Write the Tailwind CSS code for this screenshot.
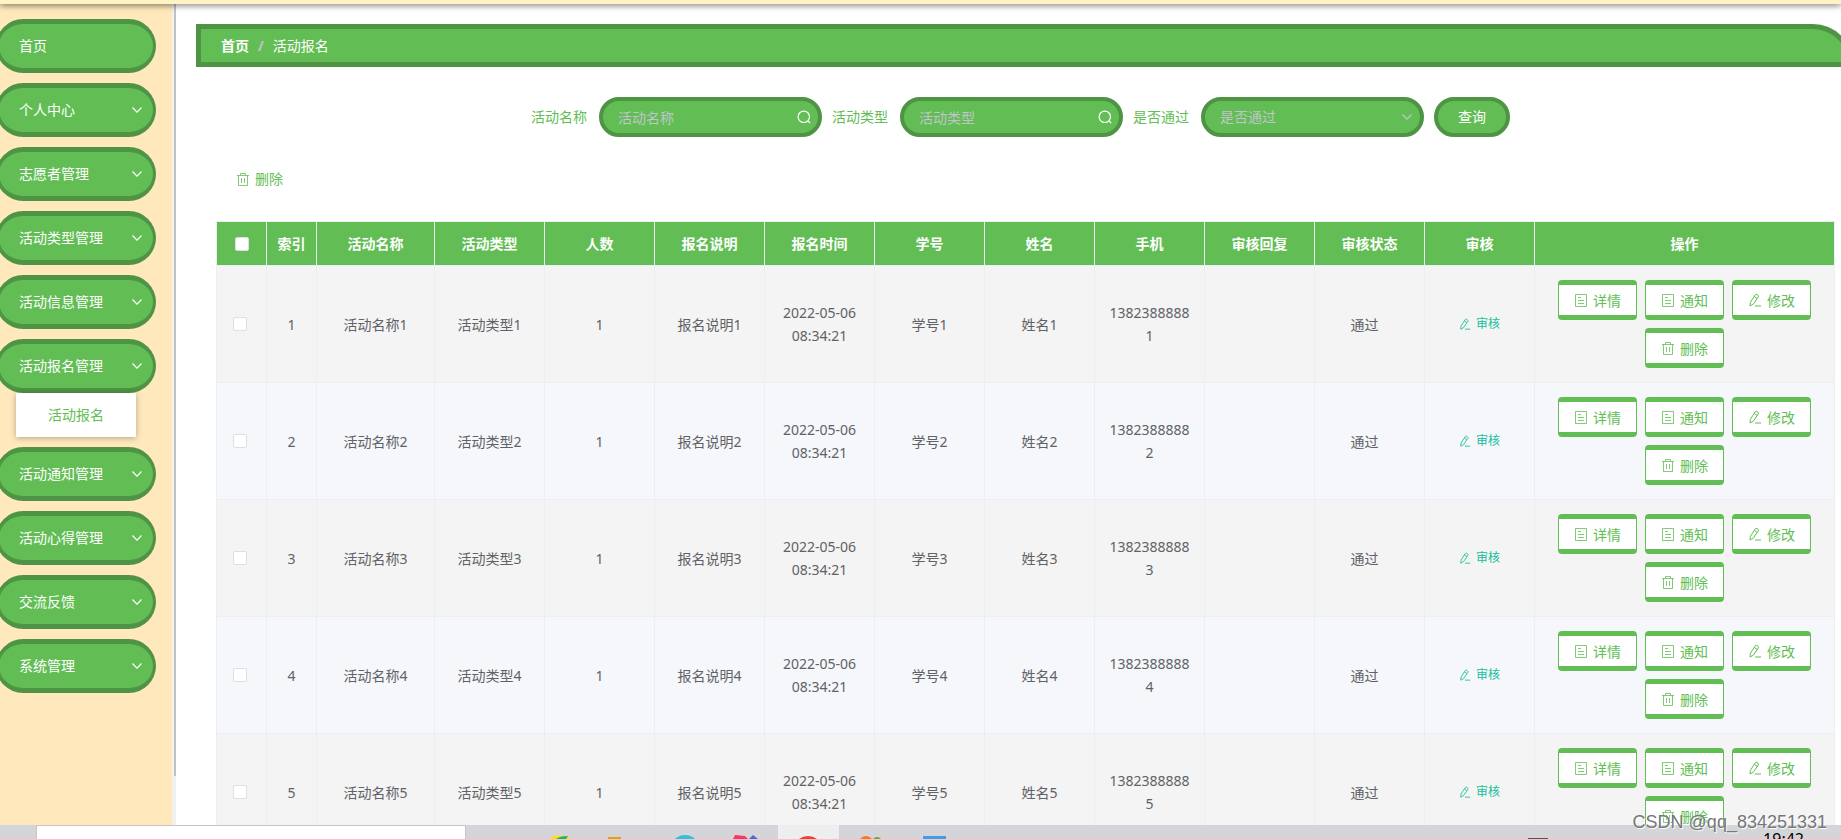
<!DOCTYPE html>
<html lang="zh-CN">
<head>
  <meta charset="UTF-8">
  <meta name="viewport" content="width=device-width, initial-scale=1.0">
  <title>活动报名</title>
  <script src="https://cdn.jsdelivr.net/npm/@tailwindcss/browser@4"></script>
</head>
<body class="bg-white font-['Noto_Sans','Noto_Sans_CJK_SC',sans-serif] text-sm text-[#606266]">
  <!-- 图标 -->
  <svg class="hidden">
    <symbol id="i-down" viewBox="0 0 12 12"><path d="M1.500 3.500 6 8.200 10.500 3.500" fill="none" stroke="currentColor" stroke-width="1.200"/></symbol>
    <symbol id="i-search" viewBox="0 0 14 14"><circle cx="6.800" cy="6.800" r="5.700" fill="none" stroke="currentColor" stroke-width="1.200"/><path d="m11 11 2.200 2.200" stroke="currentColor" stroke-width="1.200"/></symbol>
    <symbol id="i-doc" viewBox="0 0 14 14"><path d="M1.500 1.500h11v12h-11zM4 4.500h3M4 7.500h6M4 10.500h6" fill="none" stroke="currentColor" stroke-width=".8"/></symbol>
    <symbol id="i-edit" viewBox="0 0 14 14"><path d="M2 13 2.400 9.300 7.300 1.800Q8 .9 9 1.500L10 2.200Q10.900 3 10.300 3.900L5.300 11.200ZM6.300 3.400l2.900 1.900M7 13h6" fill="none" stroke="currentColor" stroke-width="1"/></symbol>
    <symbol id="i-trash" viewBox="0 0 14 14"><path d="M1 3.500h12M4.500 3.300V1.500h5v1.800M2.500 3.500v10h9v-10M5.500 6v5M8.500 6v5" fill="none" stroke="currentColor" stroke-width=".8"/></symbol>
  </svg>

  <div class="flex h-screen flex-col overflow-hidden">
    <header class="relative z-10 h-1 shrink-0 bg-[#fff3c4] shadow-[0_1px_6px_rgba(0,0,0,0.7)]"></header>

    <div class="flex min-h-0 flex-1">
      <aside class="flex w-44 shrink-0 bg-[#ffe9bc]">
        <nav id="menu" class="flex-1 overflow-hidden pt-[15px]"></nav>
        <div class="w-1 bg-[#f1f1f1] pl-[2px]">
          <div class="h-[94%] bg-[#c1c1c1]"></div>
        </div>
      </aside>

      <main class="min-w-0 flex-1 overflow-hidden pt-5 pl-5">
        <div class="-mr-3 flex h-[43px] items-center gap-[9px] rounded-tr-[40px] border-5 border-[#4e9444] bg-[#62be54] px-5 text-white">
          <a href="#" class="font-bold">首页</a>
          <span class="font-bold text-[#c0c4cc]">/</span>
          <span>活动报名</span>
        </div>

        <div class="pr-[6px] pl-5">
          <form class="flex justify-center pt-[30px] text-[#62be54]">
            <div class="mr-[10px] flex items-center gap-3">
              <label for="name">活动名称</label>
              <div class="relative">
                <input id="name" type="text" placeholder="活动名称" class="h-10 w-[223px] rounded-full border-4 border-[#4e9444] bg-[#62be54] pr-8 pl-[15px] text-white placeholder:text-[#c0c4cc]">
                <svg class="absolute top-[13px] right-[11px] size-[14px] text-white"><use href="#i-search"/></svg>
              </div>
            </div>
            <div class="mr-[10px] flex items-center gap-3">
              <label for="type">活动类型</label>
              <div class="relative">
                <input id="type" type="text" placeholder="活动类型" class="h-10 w-[223px] rounded-full border-4 border-[#4e9444] bg-[#62be54] pr-8 pl-[15px] text-white placeholder:text-[#c0c4cc]">
                <svg class="absolute top-[13px] right-[11px] size-[14px] text-white"><use href="#i-search"/></svg>
              </div>
            </div>
            <div class="mr-[10px] flex items-center gap-3">
              <label for="pass">是否通过</label>
              <div class="relative">
                <select id="pass" class="h-10 w-[223px] appearance-none rounded-full border-4 border-[#4e9444] bg-[#62be54] pr-8 pl-[15px] text-[#c0c4cc]">
                  <option>是否通过</option>
                </select>
                <svg class="pointer-events-none absolute top-[14px] right-[11px] size-3 text-[#c0c4cc]"><use href="#i-down"/></svg>
              </div>
            </div>
            <button type="button" class="mr-[10px] h-10 w-[76px] rounded-full border-4 border-[#4e9444] bg-[#62be54] text-white">查询</button>
          </form>

          <div class="flex h-[84px] items-center pl-5">
            <button type="button" class="flex items-center gap-[5px] text-[#62be54]">
              <svg class="size-[14px]"><use href="#i-trash"/></svg>删除
            </button>
          </div>

          <table class="w-full table-fixed border-collapse border border-[#ebeef5] text-center leading-[23px]">
            <colgroup>
              <col class="w-[50px]"><col class="w-[50px]"><col>
              <col class="w-[110px]"><col class="w-[110px]"><col class="w-[110px]"><col class="w-[110px]"><col class="w-[110px]">
              <col class="w-[110px]"><col class="w-[110px]"><col class="w-[110px]"><col class="w-[110px]"><col class="w-[110px]">
              <col class="w-[300px]">
            </colgroup>
            <thead class="bg-[#62be54] text-white">
              <tr class="h-11">
                <th class="border border-[#ebeef5]"><input type="checkbox" aria-label="全选" class="mx-auto block size-[14px] appearance-none rounded-xs border border-[#dcdfe6] bg-white"></th>
                <th class="border border-[#ebeef5]">索引</th>
                <th class="border border-[#ebeef5]">活动名称</th>
                <th class="border border-[#ebeef5]">活动类型</th>
                <th class="border border-[#ebeef5]">人数</th>
                <th class="border border-[#ebeef5]">报名说明</th>
                <th class="border border-[#ebeef5]">报名时间</th>
                <th class="border border-[#ebeef5]">学号</th>
                <th class="border border-[#ebeef5]">姓名</th>
                <th class="border border-[#ebeef5]">手机</th>
                <th class="border border-[#ebeef5]">审核回复</th>
                <th class="border border-[#ebeef5]">审核状态</th>
                <th class="border border-[#ebeef5]">审核</th>
                <th class="border border-[#ebeef5]">操作</th>
              </tr>
            </thead>
            <tbody id="rows"></tbody>
          </table>
        </div>
      </main>
    </div>

    <!-- 任务栏 -->
    <footer class="relative flex h-[14px] shrink-0 overflow-hidden bg-[#d3d5d8]">
      <div class="ml-9 w-[430px] border border-b-0 border-[#c6c6c6] bg-white"></div>
      <svg class="h-[14px] w-[500px] shrink-0" viewBox="466 0 500 14">
        <path d="M778 0h61v14h-61z" fill="#eceef0"/>
        <ellipse cx="560" cy="19" rx="13" ry="8.500" fill="#ffe000"/>
        <path d="M556 14q4-3 12-3l-2 3z" fill="#12b57a"/>
        <path d="M608 12h13v2h-13z" fill="#dda20c"/>
        <circle cx="685" cy="25" r="15" fill="#30c2dc"/>
        <path d="m735 10 10 1 3 3h-15z" fill="#fb3663"/>
        <path d="m753 10 5 4h-9z" fill="#4668d8"/>
        <circle cx="808" cy="26" r="15" fill="#ea4335"/>
        <circle cx="866" cy="18" r="7" fill="#f57a20"/>
        <circle cx="877" cy="17" r="5" fill="#76a832"/>
        <path d="M923 11h23v3h-23z" fill="#3b9fec"/>
      </svg>
      <div class="mt-[13px] ml-auto h-px w-5 bg-[#555]"></div>
      <time class="mt-1 mr-[37px] ml-[215px] text-base leading-5 text-black">19:42</time>
    </footer>
  </div>

  <div class="absolute right-[14px] bottom-[7px] font-['Liberation_Sans',sans-serif] text-lg leading-5 text-[#777] [text-shadow:1px_1px_1px_#fff]">CSDN @qq_834251331</div>

  <script>
    const menu = ['首页', '个人中心', '志愿者管理', '活动类型管理', '活动信息管理', '活动报名管理', '活动通知管理', '活动心得管理', '交流反馈', '系统管理'];

    document.getElementById('menu').innerHTML = menu.map((name, i) => `
      <div class="mb-[10px]">
        <button type="button" class="-ml-1 flex h-[54px] w-40 items-center justify-between rounded-[27px] border-x-3 border-y-5 border-[#4e9444] bg-[#62be54] pr-[10px] pl-5 text-white">
          ${name}
          ${i > 0 ? '<svg class="size-3"><use href="#i-down"/></svg>' : ''}
        </button>
        ${name === '活动报名管理' ? '<a href="#" class="ml-4 block h-11 w-[120px] bg-white text-center leading-11 text-[#62be54] shadow-[0_1px_6px_rgba(0,0,0,0.3)]">活动报名</a>' : ''}
      </div>`).join('');

    const td = 'border border-[#ebeef5] px-3 break-words';
    const btn = (icon, text) => `
      <button type="button" class="flex h-10 w-[79px] items-center justify-center gap-[5px] rounded border-x border-y-5 border-[#62be54] bg-white text-[#62be54]">
        <svg class="size-[14px]"><use href="#${icon}"/></svg>${text}
      </button>`;

    document.getElementById('rows').innerHTML = [1, 2, 3, 4, 5].map(n => `
      <tr class="h-[117px] bg-[#f4f4f4] even:bg-[#f5f7fb]">
        <td class="border border-[#ebeef5] pr-1"><input type="checkbox" aria-label="选择第${n}行" class="mx-auto block size-[14px] appearance-none rounded-xs border border-[#dcdfe6] bg-white"></td>
        <td class="${td}">${n}</td>
        <td class="${td}">活动名称${n}</td>
        <td class="${td}">活动类型${n}</td>
        <td class="${td}">1</td>
        <td class="${td}">报名说明${n}</td>
        <td class="${td}">2022-05-06 08:34:21</td>
        <td class="${td}">学号${n}</td>
        <td class="${td}">姓名${n}</td>
        <td class="${td}">1382388888${n}</td>
        <td class="${td}"></td>
        <td class="border border-[#ebeef5] pr-[10px]">通过</td>
        <td class="${td}">
          <button type="button" class="mx-auto flex items-center gap-[5px] text-xs text-[#13bf9b]">
            <svg class="size-3"><use href="#i-edit"/></svg>审核
          </button>
        </td>
        <td class="border border-[#ebeef5] px-4">
          <div class="flex flex-wrap justify-center gap-2">
            ${btn('i-doc', '详情')}${btn('i-doc', '通知')}${btn('i-edit', '修改')}${btn('i-trash', '删除')}
          </div>
        </td>
      </tr>`).join('');
  </script>
</body>
</html>
